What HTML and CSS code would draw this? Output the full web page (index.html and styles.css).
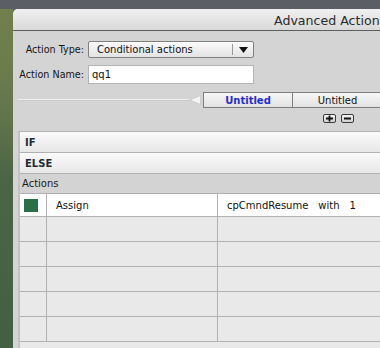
FILE: index.html
```html
<!DOCTYPE html>
<html>
<head>
<meta charset="utf-8">
<link rel="stylesheet" href="styles.css">
</head>
<body>
<div class="desk">
  <div class="topband"></div>
  <div class="deskrow">
    <div class="greenstrip"></div>
    <div class="window">
      <div class="titlebar"><span class="title">Advanced Action</span></div>
      <div class="wbody">
        <div class="form">
          <label class="lbl lbl-type">Action Type:</label>
          <div class="select">
            <span class="select-text">Conditional actions</span>
            <span class="select-btn"><svg width="9" height="6" viewBox="0 0 9 6"><path d="M0 0H9L4.5 6Z" fill="#111"/></svg></span>
          </div>
          <label class="lbl">Action Name:</label>
          <div class="input">qq1</div>
        </div>
        <div class="tabrow">
          <div class="tabline"></div>
          <svg class="tabarrow" width="12" height="10" viewBox="0 0 12 10"><path d="M0.5 5L11.5 0.5V9.5Z" fill="#f4f4f4" stroke="#c8c8c8" stroke-width="0.8"/></svg>
          <div class="tabs">
            <div class="tab active">Untitled</div>
            <div class="tab">Untitled</div>
          </div>
        </div>
        <div class="pmrow">
          <span class="pm"><svg width="9" height="7" viewBox="0 0 9 7"><path d="M1 3.5H8M4.5 0.5V6.5" stroke="#111" stroke-width="1.8"/></svg></span>
          <span class="pm"><svg width="9" height="7" viewBox="0 0 9 7"><path d="M1 3.5H8" stroke="#111" stroke-width="1.8"/></svg></span>
        </div>
        <div class="panel">
          <div class="cond">IF</div>
          <div class="cond">ELSE</div>
          <div class="acthead">Actions</div>
          <div class="grid">
            <div class="row first">
              <div class="c1"><span class="swatch"></span></div>
              <div class="c2">Assign</div>
              <div class="c3"><span>cpCmndResume</span><span class="w">with</span><span class="w">1</span></div>
            </div>
            <div class="row"><div class="c1"></div><div class="c2"></div><div class="c3"></div></div>
            <div class="row"><div class="c1"></div><div class="c2"></div><div class="c3"></div></div>
            <div class="row"><div class="c1"></div><div class="c2"></div><div class="c3"></div></div>
            <div class="row"><div class="c1"></div><div class="c2"></div><div class="c3"></div></div>
            <div class="row"><div class="c1"></div><div class="c2"></div><div class="c3"></div></div>
          </div>
        </div>
      </div>
    </div>
  </div>
</div>
</body>
</html>
```
FILE: styles.css
```css
* { box-sizing: border-box; }
html, body {
  margin: 0;
  padding: 0;
  width: 380px;
  height: 348px;
  overflow: hidden;
  background: #5c5e65;
  font-family: "DejaVu Sans", Verdana, sans-serif;
  font-size: 10px;
  color: #111;
}
.desk {
  width: 380px;
  height: 348px;
  display: flex;
  flex-direction: column;
}
.topband {
  height: 9px;
  background: #5c5e66;
  flex: none;
}
.deskrow {
  flex: 1;
  display: flex;
  min-height: 0;
}
.greenstrip {
  width: 13px;
  flex: none;
  background: linear-gradient(#707f4c 0px, #6c7c4c 60px, #61744a 110px, #4b6446 170px, #436044 339px);
}
.window {
  flex: 1;
  min-width: 0;
  background: #d4d4d4;
  border-radius: 5px 0 0 0;
  overflow: hidden;
  display: flex;
  flex-direction: column;
}
.titlebar {
  height: 22px;
  flex: none;
  background: linear-gradient(#f0f0f0, #d9d9d9);
  border-bottom: 1px solid #5f5f5f;
  padding-left: 261px;
  white-space: nowrap;
  overflow: hidden;
  display: flex;
  align-items: center;
}
.title {
  font-size: 12.6px;
  color: #2a2a2a;
  padding-top: 1px;
}
.wbody {
  flex: 1;
  display: flex;
  flex-direction: column;
  min-height: 0;
}
.form {
  margin-top: 10px;
  display: grid;
  grid-template-columns: 71px 166px;
  grid-template-rows: 17px 19px;
  column-gap: 4px;
  row-gap: 7px;
  align-items: center;
}
.lbl {
  text-align: right;
  white-space: nowrap;
  color: #151515;
  font-size: 9.6px;
}
.select {
  height: 17px;
  border: 1px solid #808080;
  border-radius: 2px;
  background: linear-gradient(#fbfbfb, #e3e3e3);
  display: flex;
  align-items: center;
}
.select-text {
  flex: 1;
  padding-left: 8px;
}
.select-btn {
  width: 21px;
  height: 11px;
  border-left: 1px solid #9a9a9a;
  display: flex;
  align-items: center;
  justify-content: center;
}
.input {
  height: 19px;
  background: #fff;
  border: 1px solid #b4b4b4;
  padding-left: 3px;
  display: flex;
  align-items: center;
}
.tabrow {
  margin-top: 8px;
  margin-left: 5px;
  height: 16px;
  display: flex;
  align-items: center;
}
.tabline {
  flex: none;
  width: 171px;
  height: 2px;
  border-top: 1px solid #f2f2f2;
  border-bottom: 1px solid #c9c9c9;
}
.tabarrow {
  flex: none;
}
.tabs {
  flex: none;
  margin-left: 2px;
  display: flex;
  height: 16px;
}
.tab {
  flex: none;
  width: 90px;
  height: 16px;
  border: 1px solid #7e7e7e;
  background: linear-gradient(#f7f7f7, #e2e2e2);
  display: flex;
  align-items: center;
  justify-content: center;
  color: #111;
}
.tab + .tab {
  border-left: none;
}
.tab.active {
  color: #1f2fd0;
  font-weight: bold;
}
.pmrow {
  margin-top: 6px;
  margin-left: 310px;
  height: 9px;
  display: flex;
  gap: 5px;
}
.pm {
  width: 13px;
  height: 9px;
  border: 1px solid #3a3a3a;
  border-radius: 2px;
  background: linear-gradient(#f4f4f4, #d0d0d0);
  display: flex;
  align-items: center;
  justify-content: center;
}
.panel {
  margin-top: 8px;
  margin-left: 5px;
  width: 380px;
  flex: 1;
  border-top: 1px solid #b3b3b3;
  border-left: 2px solid #c2c2c2;
  background: #e9e9e9;
}
.cond {
  height: 21px;
  background: linear-gradient(#fafafa, #e7e7e7);
  border-bottom: 1px solid #b1b1b1;
  font-weight: bold;
  color: #1e2a34;
  padding-left: 5px;
  display: flex;
  align-items: center;
}
.acthead {
  height: 20px;
  background: #d3d3d3;
  border-bottom: 1px solid #b1b1b1;
  padding-left: 2px;
  display: flex;
  align-items: center;
  color: #1a1a1a;
}
.row {
  display: flex;
  height: 25px;
  border-bottom: 1px solid #b1b1b1;
}
.row.first {
  height: 23px;
  background: #fff;
}
.c1 {
  width: 27px;
  border-right: 1px solid #b1b1b1;
  display: flex;
  align-items: center;
  padding-left: 4px;
}
.c2 {
  width: 171px;
  border-right: 1px solid #b1b1b1;
  padding-left: 9px;
  display: flex;
  align-items: center;
}
.c3 {
  flex: 1;
  padding-left: 9px;
  display: flex;
  align-items: center;
  white-space: nowrap;
}
.c3 .w {
  margin-left: 10px;
}
.swatch {
  width: 14px;
  height: 13px;
  background: #2b6e47;
}
```
